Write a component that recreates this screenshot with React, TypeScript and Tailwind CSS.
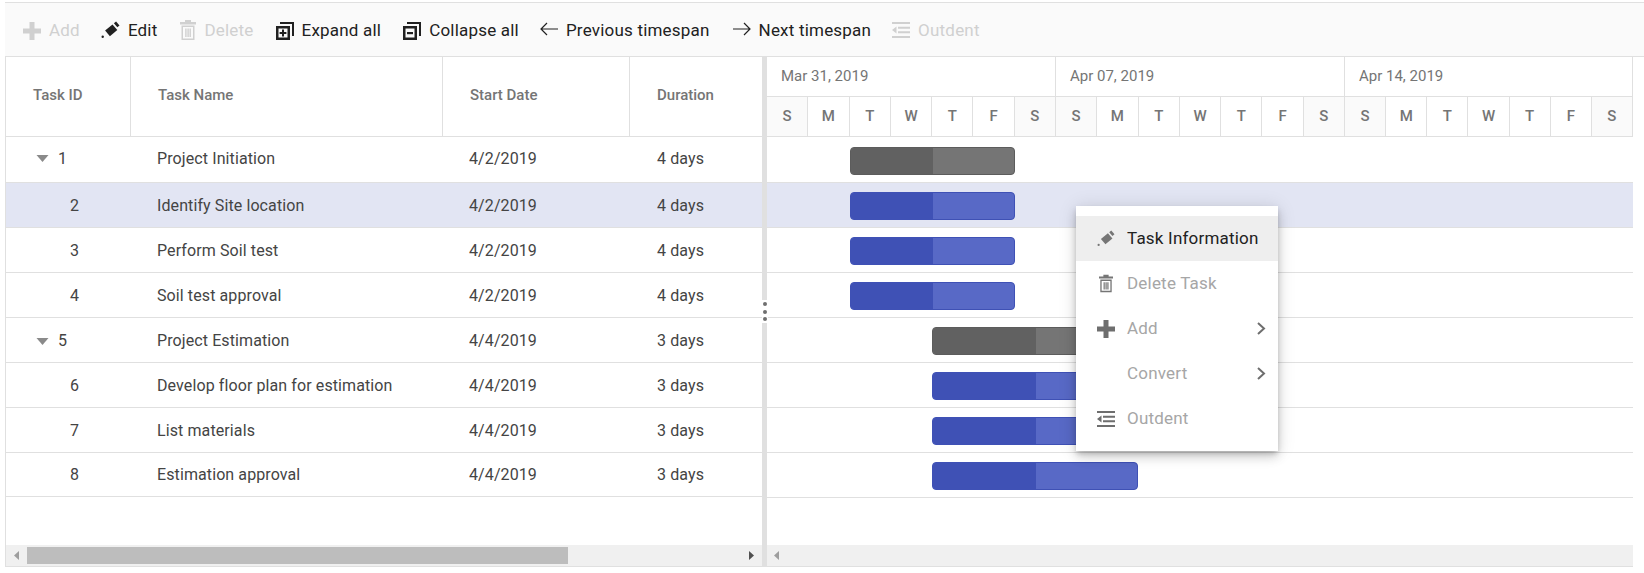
type IconProps = { className?: string };

function PlusIcon({ className }: IconProps) {
  return (
    <svg viewBox="0 0 18 18" className={className} fill="currentColor">
      <path d="M6.5 0h5v6.5H18v5h-6.5V18h-5v-6.5H0v-5h6.5z" />
    </svg>
  );
}

function PenIcon({ className }: IconProps) {
  return (
    <svg viewBox="0 0 18 18" className={className} fill="currentColor">
      <path d="M3.6 9.6 11 3.4 15.8 9 8.4 15.2z" />
      <path d="M12.4 2.3 14.6.4 18 4.4 15.8 6.3z" />
      <circle cx="1.2" cy="15.8" r="1.2" />
    </svg>
  );
}

function TrashIcon({ className }: IconProps) {
  return (
    <svg viewBox="0 0 16 20" className={className} fill="currentColor">
      <path d="M5 0h6v2h5v2.4H0V2h5z" />
      <path fillRule="evenodd" d="M1.5 5.5h13V20h-13zM3 7v11.4h10V7z" />
      <path d="M5.2 8.5h1.4v8.4H5.2zM7.4 8.5h1.4v8.4H7.4zM9.5 8.5h1.4v8.4H9.5z" />
    </svg>
  );
}

function ExpandIcon({ className, minus }: IconProps & { minus?: boolean }) {
  return (
    <svg viewBox="0 0 18 18" className={className} fill="currentColor">
      <path d="M4 0h14v14h-2V2H4z" />
      <path fillRule="evenodd" d="M0 4h14v14H0zM2.5 6.5v9h9v-9z" />
      {minus ? <path d="M4 10h6v2.2H4z" /> : <path d="M6 7.6h2v2.4h2.4v2H8v2.4H6V12H3.6v-2H6z" />}
    </svg>
  );
}

function ArrowIcon({ className, left }: IconProps & { left?: boolean }) {
  return (
    <svg viewBox="0 0 18 14" className={className} fill="none" stroke="currentColor" strokeWidth="1.2">
      {left ? <path d="M18 7H1M7 1 1 7l6 6" /> : <path d="M0 7h17M11 1l6 6-6 6" />}
    </svg>
  );
}

function OutdentIcon({ className }: IconProps) {
  return (
    <svg viewBox="0 0 18 16" className={className} fill="currentColor">
      <path d="M0 0h18v2H0zM6 4.7h12v2H6zM6 9.3h12v2H6zM0 14h18v2H0z" />
      <path d="M4.5 4.6v6.8L0 8z" />
    </svg>
  );
}

const toolbarItems = [
  { label: "Add", off: true, icon: <PlusIcon className="w-[18px] h-[18px]" />, mr: "mr-[21px]" },
  { label: "Edit", icon: <PenIcon className="w-[19px] h-[18px] -mt-[2px]" />, mr: "mr-[23px]" },
  { label: "Delete", off: true, icon: <TrashIcon className="w-[16px] h-[20px] -mt-[2px]" />, mr: "mr-[22px]" },
  { label: "Expand all", icon: <ExpandIcon className="w-[18px] h-[18px]" />, mr: "mr-[22px]" },
  { label: "Collapse all", icon: <ExpandIcon minus className="w-[18px] h-[18px]" />, mr: "mr-[21px]" },
  { label: "Previous timespan", icon: <ArrowIcon left className="w-[18px] h-[14px] -mt-[4px]" />, mr: "mr-[23px]" },
  { label: "Next timespan", icon: <ArrowIcon className="w-[18px] h-[14px] -mt-[4px]" />, mr: "mr-[21px]" },
  { label: "Outdent", off: true, icon: <OutdentIcon className="w-[18px] h-[16px] -mt-[2px]" />, mr: "" },
];

const tasks = [
  { id: 1, name: "Project Initiation", start: "4/2/2019", duration: "4 days", parent: true },
  { id: 2, name: "Identify Site location", start: "4/2/2019", duration: "4 days", selected: true },
  { id: 3, name: "Perform Soil test", start: "4/2/2019", duration: "4 days" },
  { id: 4, name: "Soil test approval", start: "4/2/2019", duration: "4 days" },
  { id: 5, name: "Project Estimation", start: "4/4/2019", duration: "3 days", parent: true },
  { id: 6, name: "Develop floor plan for estimation", start: "4/4/2019", duration: "3 days" },
  { id: 7, name: "List materials", start: "4/4/2019", duration: "3 days" },
  { id: 8, name: "Estimation approval", start: "4/4/2019", duration: "3 days" },
];

const weeks = ["Mar 31, 2019", "Apr 07, 2019", "Apr 14, 2019"];
const days = ["S", "M", "T", "W", "T", "F", "S"];

const menuItems = [
  { label: "Task Information", active: true, icon: <PenIcon className="w-[18px] h-[17px] text-[#757575]" /> },
  { label: "Delete Task", icon: <TrashIcon className="w-[14px] h-[19px] text-[#757575]" /> },
  { label: "Add", sub: true, icon: <PlusIcon className="w-[18px] h-[18px] text-[#6e6e6e]" /> },
  { label: "Convert", sub: true },
  { label: "Outdent", icon: <OutdentIcon className="w-[18px] h-[16px] text-[#6e6e6e]" /> },
];

function rowHeight(index: number, left: boolean) {
  if (index === 0) return "h-[46px]";
  if (index === 7 && left) return "h-[44px]";
  return "h-[45px]";
}

// the text sits a little off centre in the first and last rows
function rowNudge(index: number) {
  if (index === 0) return "pb-[2px]";
  if (index === 7) return "";
  return "pt-[2px]";
}

function GridHeader() {
  return (
    <div className="flex h-[80px] shrink-0 items-center border-b border-[#e0e0e0] pb-0 text-[15px] font-medium text-[#757575]">
      <div className="flex h-full w-[125px] items-center border-r border-[#e0e0e0] pb-[2px] pl-[27px]">Task ID</div>
      <div className="flex h-full w-[312px] items-center border-r border-[#e0e0e0] pb-[2px] pl-[27px]">Task Name</div>
      <div className="flex h-full w-[187px] items-center border-r border-[#e0e0e0] pb-[2px] pl-[27px]">Start Date</div>
      <div className="flex h-full flex-1 items-center pb-[2px] pl-[27px]">Duration</div>
    </div>
  );
}

function TaskRow({ task, index }: { task: (typeof tasks)[number]; index: number }) {
  return (
    <div
      className={`flex shrink-0 items-center border-b border-[#e0e0e0] text-[16px] tracking-[0.1px] text-[#444444] ${rowHeight(index, true)} ${rowNudge(index)} ${
        task.selected ? "bg-[#e2e5f3]" : ""
      }`}
    >
      <div className={`flex w-[125px] items-center ${task.parent ? "pl-[30px]" : "pl-[64px]"}`}>
        {task.parent && (
          <svg viewBox="0 0 12 7" className="mr-[9px] h-[7px] w-[13px] text-[#8a8a8a]" fill="currentColor">
            <path d="M0 0h12L6 7z" />
          </svg>
        )}
        {task.id}
      </div>
      <div className="w-[312px] pl-[26px]">{task.name}</div>
      <div className="w-[187px] pl-[26px]">{task.start}</div>
      <div className="flex-1 pl-[27px]">{task.duration}</div>
    </div>
  );
}

function TimelineHeader() {
  return (
    <div className="flex h-[80px] shrink-0 border-b border-[#e0e0e0]">
      {weeks.map((week, w) => (
        <div key={week} className={`flex shrink-0 flex-col border-r border-[#e0e0e0] ${w < 2 ? "w-[289px]" : "w-[288px]"}`}>
          <div className="flex h-[40px] items-center border-b border-[#e0e0e0] pl-[14px] text-[15px] text-[#757575]">
            {week}
          </div>
          <div className="flex flex-1">
            {days.map((day, i) => (
              <div
                key={i}
                className={`flex flex-1 items-center justify-center text-[15px] font-medium text-[#757575] ${
                  i < 6 ? "border-r border-[#e0e0e0]" : ""
                } ${i === 0 || i === 6 ? "bg-[#fafafa]" : ""}`}
              >
                {day}
              </div>
            ))}
          </div>
        </div>
      ))}
    </div>
  );
}

function TaskBar({ task }: { task: (typeof tasks)[number] }) {
  const early = task.id < 5;
  const dark = task.parent ? "bg-[#616161]" : "bg-[#3f51b5]";
  const light = task.parent ? "bg-[#757575]" : "bg-[#5869c6]";
  const edge = task.parent ? "border-[#5c5c5c]" : "border-[#3f51b5]";
  return (
    <div
      className={`flex h-[28px] overflow-hidden rounded-[4px] border ${edge} ${light} ${
        early ? "ml-[83px] w-[165px]" : "ml-[165px] w-[206px]"
      }`}
    >
      <div className={`h-full ${dark} ${early ? "w-[82px]" : "w-[103px]"}`} />
    </div>
  );
}

function ScrollArrow({ right, dark }: { right?: boolean; dark?: boolean }) {
  return (
    <svg viewBox="0 0 5 9" className={`h-[9px] w-[5px] ${dark ? "text-[#505050]" : "text-[#9e9e9e]"}`} fill="currentColor">
      <path d={right ? "M0 0l5 4.5L0 9z" : "M5 0 0 4.5 5 9z"} />
    </svg>
  );
}

function ContextMenu() {
  return (
    <div className="absolute left-[1076px] top-[206px] w-[202px] bg-white py-[10px] shadow-[0_3px_5px_-1px_rgba(0,0,0,0.2),0_6px_10px_0_rgba(0,0,0,0.14),0_1px_18px_0_rgba(0,0,0,0.12)]">
      {menuItems.map((item) => (
        <div
          key={item.label}
          className={`flex h-[45px] items-center text-[17px] tracking-[0.2px] ${item.active ? "bg-[#eeeeee] text-[#212121]" : "text-[#a6a6a6]"}`}
        >
          <div className="flex w-[51px] justify-center pl-[8px]">{item.icon}</div>
          <span className="flex-1">{item.label}</span>
          {item.sub && (
            <svg viewBox="0 0 9 13" className="mr-[12px] h-[13px] w-[9px] text-[#6e6e6e]" fill="none" stroke="currentColor" strokeWidth="2">
              <path d="M1 1l6 5.5L1 12" />
            </svg>
          )}
        </div>
      ))}
    </div>
  );
}

export default function App() {
  return (
    <div className="relative h-[573px] w-[1644px] overflow-hidden bg-white pt-[2px] font-['Roboto',sans-serif]">
      <div className="ml-[5px]">
        {/* toolbar */}
        <div className="flex h-[55px] items-center border-y border-[#e0e0e0] bg-[#fafafa] pl-[18px] pt-[3px] text-[17px] tracking-[0.2px] text-[#212121]">
          {toolbarItems.map((item) => (
            <div key={item.label} className={`flex items-center gap-[8px] ${item.mr} ${item.off ? "text-[#d0d0d0]" : ""}`}>
              {item.icon}
              <span>{item.label}</span>
            </div>
          ))}
        </div>

        <div className="relative flex h-[510px] w-[1628px] border-b border-l border-[#e0e0e0]">
          {/* task grid */}
          <div className="flex w-[756px] shrink-0 flex-col">
            <GridHeader />
            {tasks.map((task, i) => (
              <TaskRow key={task.id} task={task} index={i} />
            ))}
            <div className="mt-auto flex h-[21px] shrink-0 items-center bg-[#f0f0f0] px-[8px]">
              <ScrollArrow />
              <div className="ml-[8px] h-[17px] w-[541px] bg-[#bdbdbd]" />
              <div className="ml-auto">
                <ScrollArrow right dark />
              </div>
            </div>
          </div>

          {/* splitter */}
          <div className="relative w-[5px] shrink-0 bg-[#e0e0e0]">
            <div className="absolute left-0 top-[243px] flex h-[23px] w-[6px] flex-col items-center justify-center gap-[3.5px] bg-white">
              <span className="h-[4px] w-[4px] rounded-full bg-[#6f6f6f]" />
              <span className="h-[4px] w-[4px] rounded-full bg-[#6f6f6f]" />
              <span className="h-[4px] w-[4px] rounded-full bg-[#6f6f6f]" />
            </div>
          </div>

          {/* timeline */}
          <div className="flex min-w-0 flex-1 flex-col">
            <TimelineHeader />
            {tasks.map((task, i) => (
              <div
                key={task.id}
                className={`flex shrink-0 items-center border-b border-[#e0e0e0] pt-[2px] ${rowHeight(i, false)} ${
                  task.selected ? "bg-[#e2e5f3]" : ""
                }`}
              >
                <TaskBar task={task} />
              </div>
            ))}
            <div className="mt-auto flex h-[21px] shrink-0 items-center bg-[#f0f0f0] pl-[7px]">
              <ScrollArrow />
            </div>
          </div>
        </div>
      </div>

      <ContextMenu />
    </div>
  );
}
